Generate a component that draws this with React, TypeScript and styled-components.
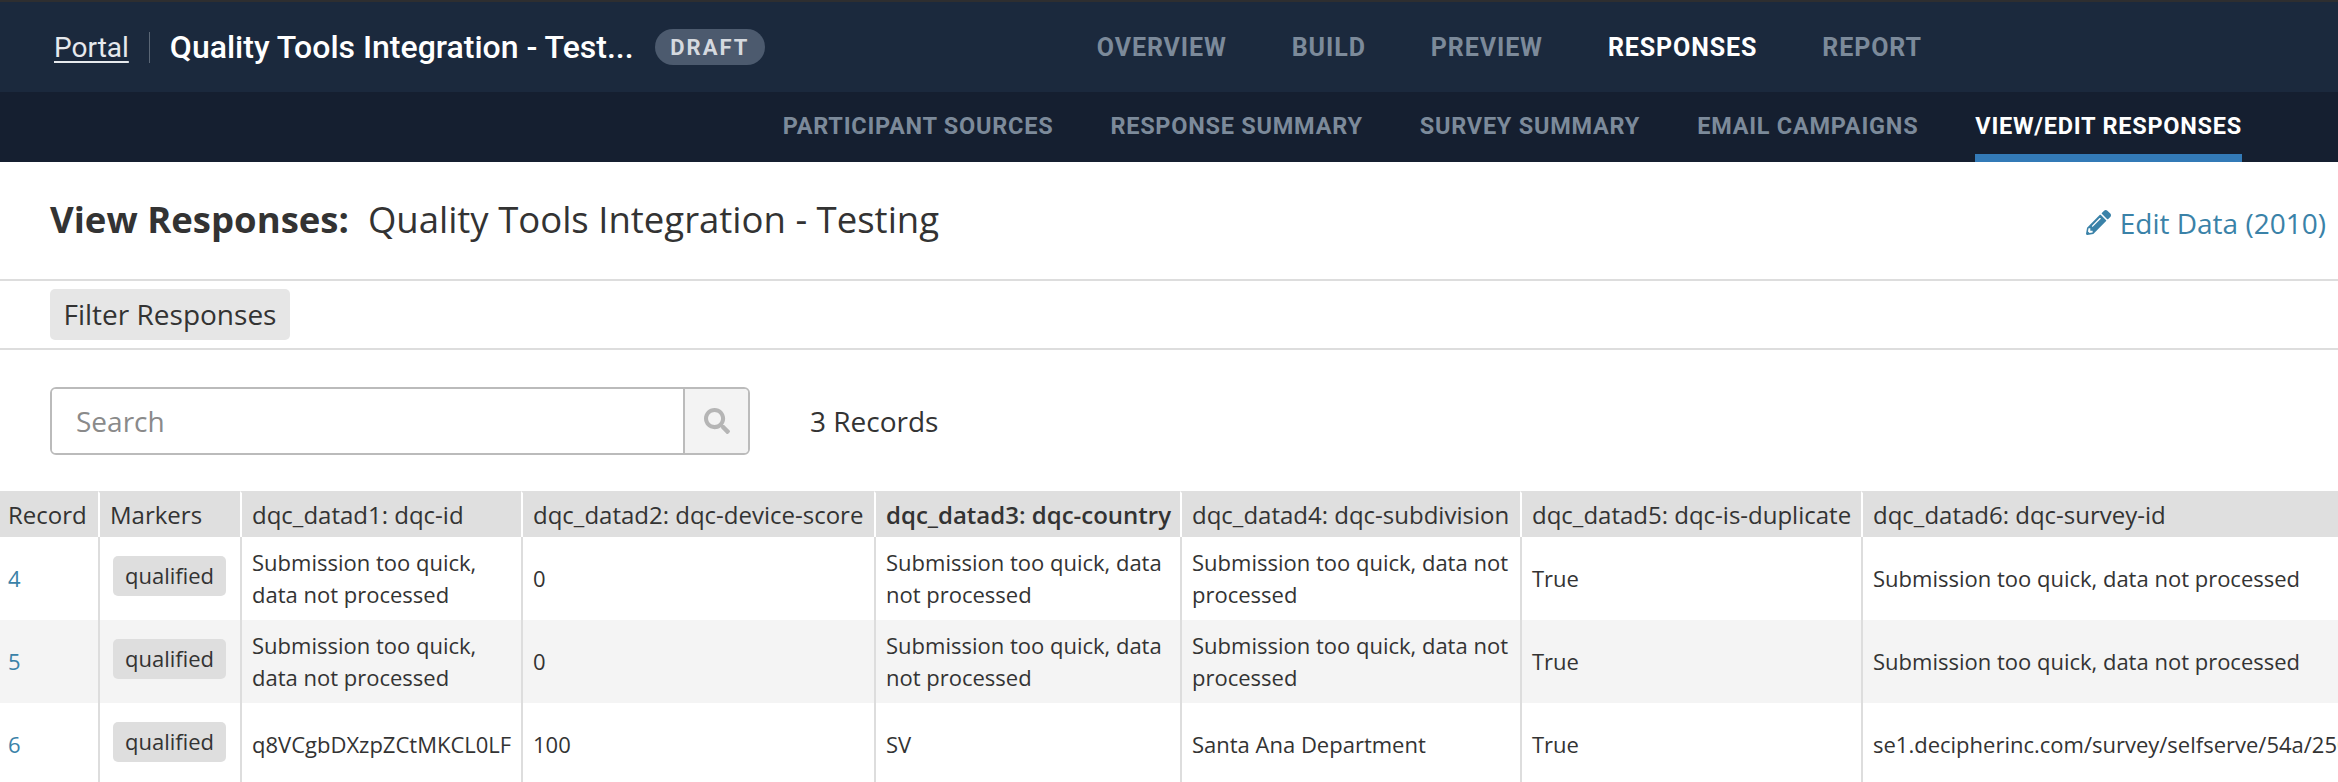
import { createGlobalStyle, styled } from "styled-components";
import { FaPencilAlt, FaSearch } from "react-icons/fa";

const GlobalStyle = createGlobalStyle`
  html, body {
    margin: 0;
    padding: 0;
    background: #fff;
    overflow: hidden;
  }
  * {
    box-sizing: border-box;
  }
`;

const Page = styled.div`
  width: 2338px;
  height: 782px;
  overflow: hidden;
  font-family: "Open Sans", "Liberation Sans", sans-serif;
  color: #333;
`;

const TopBar = styled.header`
  height: 92px;
  background: #1b293d;
  border-top: 2px solid #2e2e30;
  display: flex;
  align-items: center;
  padding-left: 54px;
`;

const Crumb = styled.a`
  font-family: Roboto, sans-serif;
  font-size: 28px;
  color: #e6e9ed;
  text-decoration: underline;
  text-underline-offset: 4px;
  text-decoration-thickness: 2px;
`;

const CrumbDivider = styled.span`
  width: 1px;
  height: 31px;
  margin: 0 20px;
  background: #5a6675;
`;

const ProjectTitle = styled.h1`
  margin: 0;
  font-family: Roboto, sans-serif;
  font-size: 32px;
  font-weight: 500;
  color: #fff;
  width: 485px;
  white-space: nowrap;
`;

const DraftPill = styled.span`
  width: 110px;
  height: 36px;
  border-radius: 18px;
  background: #4c5a6e;
  color: #d5d9df;
  font-family: Roboto, sans-serif;
  font-size: 22px;
  font-weight: 700;
  letter-spacing: 2px;
  display: flex;
  align-items: center;
  justify-content: center;
`;

const MainNav = styled.nav`
  margin-left: 332px;
  display: flex;
  gap: 65px;
`;

const NavLink = styled.a<{ $active?: boolean }>`
  font-family: Roboto, sans-serif;
  font-size: 25px;
  font-weight: 700;
  letter-spacing: 0.9px;
  color: ${(p) => (p.$active ? "#fff" : "#7c8a9a")};
`;

const SubBar = styled.nav`
  height: 70px;
  background: #151f30;
  display: flex;
  justify-content: flex-end;
  gap: 57px;
  padding-right: 96px;
`;

const SubLink = styled.a<{ $active?: boolean }>`
  height: 70px;
  padding-top: 20px;
  line-height: 28px;
  font-family: Roboto, sans-serif;
  font-size: 23.5px;
  font-weight: 700;
  letter-spacing: 0.75px;
  color: ${(p) => (p.$active ? "#fff" : "#7c8a9a")};
  border-bottom: 8px solid ${(p) => (p.$active ? "#337ab7" : "transparent")};
`;

const TitleRow = styled.div`
  height: 119px;
  padding: 0 12px 4px 50px;
  display: flex;
  align-items: center;
  justify-content: space-between;
  border-bottom: 2px solid #ddd;
`;

const Heading = styled.h2`
  margin: 0;
  font-size: 36.5px;
  font-weight: 400;
  color: #333;
  white-space: pre;
`;

const HeadingStrong = styled.strong`
  font-weight: 700;
`;

const EditLink = styled.a`
  display: flex;
  align-items: center;
  gap: 9px;
  margin-top: 8px;
  font-size: 28px;
  color: #3a82a8;
`;

const FilterRow = styled.div`
  height: 69px;
  padding: 8px 50px 0;
  border-bottom: 2px solid #ddd;
`;

const FilterButton = styled.button`
  display: block;
  width: 240px;
  height: 51px;
  border: 0;
  padding: 0 0 2px;
  border-radius: 5px;
  background: #e6e6e6;
  color: #333;
  font-family: inherit;
  font-size: 28px;
`;

const SearchRow = styled.div`
  height: 141px;
  padding: 37px 50px 0;
  display: flex;
  align-items: flex-start;
`;

const SearchBox = styled.div`
  width: 700px;
  height: 68px;
  border: 2px solid #bbb;
  border-radius: 6px;
  display: flex;
  overflow: hidden;
`;

const SearchInput = styled.input`
  flex: 1;
  border: 0;
  outline: 0;
  padding: 0 24px;
  font-family: inherit;
  font-size: 28px;
  color: #333;
  &::placeholder {
    color: #8a8a8a;
    opacity: 1;
  }
`;

const SearchButton = styled.span`
  width: 65px;
  border-left: 2px solid #bbb;
  background: #f3f3f3;
  color: #b5b5b5;
  font-size: 26px;
  display: flex;
  align-items: center;
  justify-content: center;
`;

const RecordCount = styled.span`
  margin-left: 60px;
  line-height: 68px;
  font-size: 28px;
  color: #333;
`;

const Table = styled.table`
  width: 2700px;
  table-layout: fixed;
  border-collapse: separate;
  border-spacing: 0;
  line-height: 32px;
  color: #333;
`;

const Row = styled.tr<{ $striped?: boolean }>`
  background: ${(p) => (p.$striped ? "#f4f4f4" : "#fff")};
`;

const HeadCell = styled.th<{ $sorted?: boolean }>`
  height: 46px;
  padding: 0 10px;
  background: #dfdfdf;
  border-top: 2px solid #dfdfdf;
  border-left: 2px solid #fff;
  text-align: left;
  font-size: 24px;
  font-weight: ${(p) => (p.$sorted ? 600 : 400)};
  white-space: nowrap;
  &:first-child {
    border-left: 0;
    padding: 0 8px;
  }
`;

const Cell = styled.td`
  height: 83px;
  padding: 0 10px 2px;
  border-left: 2px solid #ddd;
  font-size: 22px;
  vertical-align: middle;
  white-space: pre-line;
  &:first-child {
    border-left: 0;
    padding: 0 8px 2px;
  }
`;

const RecordLink = styled.a`
  color: #3a82a8;
`;

const Marker = styled.span`
  display: flex;
  align-items: center;
  justify-content: center;
  width: 113px;
  height: 40px;
  margin: 0 0 3px 3px;
  padding-bottom: 2px;
  border-radius: 5px;
  background: #dedede;
`;

const columns = [
  { label: "Record", width: 98 },
  { label: "Markers", width: 142 },
  { label: "dqc_datad1: dqc-id", width: 281 },
  { label: "dqc_datad2: dqc-device-score", width: 353 },
  { label: "dqc_datad3: dqc-country", width: 306, sorted: true },
  { label: "dqc_datad4: dqc-subdivision", width: 340 },
  { label: "dqc_datad5: dqc-is-duplicate", width: 341 },
  { label: "dqc_datad6: dqc-survey-id", width: 839 },
];

const tooQuick = "Submission too quick, data not processed";

const rows = [
  { id: 4, values: ["Submission too quick,\ndata not processed", "0", "Submission too quick, data\nnot processed", "Submission too quick, data not\nprocessed", "True", tooQuick] },
  { id: 5, values: ["Submission too quick,\ndata not processed", "0", "Submission too quick, data\nnot processed", "Submission too quick, data not\nprocessed", "True", tooQuick] },
  { id: 6, values: ["q8VCgbDXzpZCtMKCL0LF", "100", "SV", "Santa Ana Department", "True", "se1.decipherinc.com/survey/selfserve/54a/250"] },
];

export default function App() {
  return (
    <Page>
      <GlobalStyle />
      <TopBar>
        <Crumb>Portal</Crumb>
        <CrumbDivider />
        <ProjectTitle>Quality Tools Integration - Test...</ProjectTitle>
        <DraftPill>DRAFT</DraftPill>
        <MainNav>
          <NavLink>OVERVIEW</NavLink>
          <NavLink>BUILD</NavLink>
          <NavLink>PREVIEW</NavLink>
          <NavLink $active>RESPONSES</NavLink>
          <NavLink>REPORT</NavLink>
        </MainNav>
      </TopBar>
      <SubBar>
        <SubLink>PARTICIPANT SOURCES</SubLink>
        <SubLink>RESPONSE SUMMARY</SubLink>
        <SubLink>SURVEY SUMMARY</SubLink>
        <SubLink>EMAIL CAMPAIGNS</SubLink>
        <SubLink $active>VIEW/EDIT RESPONSES</SubLink>
      </SubBar>
      <TitleRow>
        <Heading>
          <HeadingStrong>View Responses:</HeadingStrong>{"  "}Quality Tools Integration - Testing
        </Heading>
        <EditLink>
          <FaPencilAlt size={25} />
          Edit Data (2010)
        </EditLink>
      </TitleRow>
      <FilterRow>
        <FilterButton>Filter Responses</FilterButton>
      </FilterRow>
      <SearchRow>
        <SearchBox>
          <SearchInput placeholder="Search" />
          <SearchButton>
            <FaSearch />
          </SearchButton>
        </SearchBox>
        <RecordCount>3 Records</RecordCount>
      </SearchRow>
      <Table>
        <colgroup>
          {columns.map((c) => (
            <col key={c.label} width={c.width} />
          ))}
        </colgroup>
        <thead>
          <tr>
            {columns.map((c) => (
              <HeadCell key={c.label} $sorted={c.sorted}>
                {c.label}
              </HeadCell>
            ))}
          </tr>
        </thead>
        <tbody>
          {rows.map((r, i) => (
            <Row key={r.id} $striped={i % 2 === 1}>
              <Cell>
                <RecordLink>{r.id}</RecordLink>
              </Cell>
              <Cell>
                <Marker>qualified</Marker>
              </Cell>
              {r.values.map((v, j) => (
                <Cell key={j}>{v}</Cell>
              ))}
            </Row>
          ))}
        </tbody>
      </Table>
    </Page>
  );
}
